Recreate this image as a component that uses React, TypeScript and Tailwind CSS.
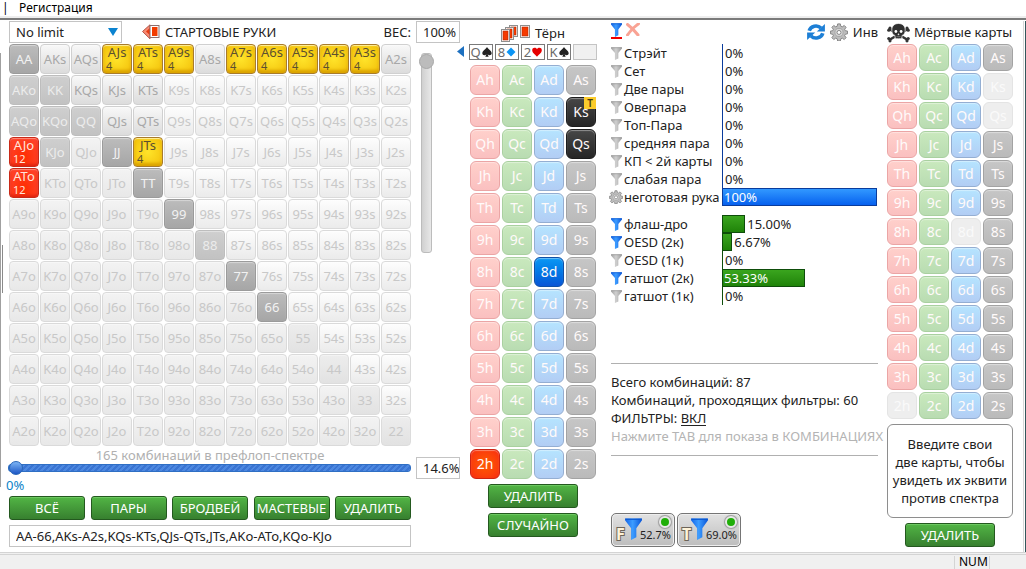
import React from 'react'
import clsx from 'clsx'

const RANKS = ['A', 'K', 'Q', 'J', 'T', '9', '8', '7', '6', '5', '4', '3', '2']
const SUITS = ['h', 'c', 'd', 's']

// combos that pass the filters
const HITS: Record<string, number> = {
    AJs: 4, ATs: 4, A9s: 4, A7s: 4, A6s: 4, A5s: 4, A4s: 4, A3s: 4, JTs: 4, AJo: 12, ATo: 12,
}
const STRONG = ['AA', 'JJ', 'TT', '99', '77', '66']
const MEDIUM = ['KK', 'QQ', '88', 'AKo', 'AQo', 'KQo', 'KJo']
const SUITED = ['AKs', 'AQs', 'A8s', 'A2s', 'KQs', 'KJs', 'KTs', 'QJs', 'QTs']

const handName = (r: number, c: number) => {
    if (r === c) return RANKS[r] + RANKS[c]
    return r < c ? RANKS[r] + RANKS[c] + 's' : RANKS[c] + RANKS[r] + 'o'
}

const handTone = (hand: string) => {
    if (HITS[hand] && hand.endsWith('s')) return 'border-[#a87b2c] bg-radial-[at_50%_50%] from-[#ffe42a] to-[#f2be08] text-[#5c5030] shadow-[inset_0_1px_1px_#fff0a0,inset_0_-3px_3px_#dba400]'
    if (HITS[hand]) return 'border-[#c92a18] bg-radial-[at_50%_70%] from-[#ff2c00] to-[#ff4632] text-[#ffe4dc] shadow-[inset_0_1px_1px_#ff9080,inset_0_-2px_3px_#e02410]'
    if (STRONG.includes(hand)) return 'border-[#9b9b9b] bg-linear-to-b from-[#bcbcbc] to-[#a6a6a6] text-[#f2f2f2]'
    if (MEDIUM.includes(hand)) return 'border-[#bdbdbd] bg-linear-to-b from-[#cfcfcf] to-[#c2c2c2] text-[#ececec]'
    if (SUITED.includes(hand)) return 'border-[#d0d0d0] bg-linear-to-b from-[#f8f8f8] to-[#dcdcdc] text-[#a8a8a8]'
    if (hand.length === 2) return 'border-[#dcdcdc] bg-linear-to-b from-[#ededed] to-[#e2e2e2] text-[#c8c8c8]'
    if (hand.endsWith('s')) return 'border-[#dadada] bg-linear-to-b from-[#fdfdfd] to-[#ebebeb] text-[#c8c8c8]'
    return 'border-[#dadada] bg-linear-to-b from-[#f3f3f3] to-[#e8e8e8] text-[#c8c8c8]'
}

const SUIT_TONE: Record<string, string> = {
    h: 'border-[#eba5a5] bg-linear-to-b from-[#ffd0cb] to-[#fac0c0]',
    c: 'border-[#a9d0a0] bg-linear-to-b from-[#c9e9bd] to-[#b9dcb2]',
    d: 'border-[#94aed2] bg-linear-to-b from-[#b5e4ff] to-[#b2cdf4]',
    s: 'border-[#a3a3a3] bg-linear-to-b from-[#c6c6c6] to-[#bababa]',
}
const SUIT_ON: Record<string, string> = {
    h: 'border-[#cc2314] bg-radial from-[#ff5a00] to-[#f82a10]',
    d: 'border-[#0f4fa6] bg-linear-to-b from-[#0c98f4] to-[#0a55d6]',
    s: 'border-[#1c1c1c] bg-linear-to-b from-[#474747] to-[#262626]',
}

const MADE = ['Стрэйт', 'Сет', 'Две пары', 'Оверпара', 'Топ-Пара', 'средняя пара', 'КП < 2й карты', 'слабая пара']
const DRAWS: [string, number, string, boolean][] = [
    ['флаш-дро', 15, '15.00%', true],
    ['OESD (2к)', 6.67, '6.67%', true],
    ['OESD (1к)', 0, '0%', false],
    ['гатшот (2к)', 53.33, '53.33%', true],
    ['гатшот (1к)', 0, '0%', false],
]

const Funnel = ({ on, className }: { on?: boolean; className?: string }) => (
    <svg viewBox="0 0 12 14" preserveAspectRatio="none" className={clsx('shrink-0', className)}>
        <defs>
            <linearGradient id={on ? 'fOn' : 'fOff'} x1="0" x2="1">
                <stop offset="0" stopColor={on ? '#1565e8' : '#a2a2a2'} />
                <stop offset="0.45" stopColor={on ? '#3d9dff' : '#d0d0d0'} />
                <stop offset="1" stopColor={on ? '#0a55d8' : '#9c9c9c'} />
            </linearGradient>
        </defs>
        <path d="M0 0.300H12V1.500L8 6.500V12.300L4.300 14V6.500L0 1.500Z" fill={on ? 'url(#fOn)' : 'url(#fOff)'} />
        <path d="M0.300 0.800H11.700" stroke={on ? '#0b58d0' : '#999'} strokeWidth="0.8" />
    </svg>
)

const Gear = ({ className }: { className?: string }) => (
    <svg viewBox="0 0 20 20" className={clsx('shrink-0', className)}>
        <path
            d="M8.500 1h3l.5 2.600 1.600.7 2.200-1.600 2.100 2.100-1.600 2.200.7 1.600 2.500.4v3l-2.500.5-.7 1.600 1.600 2.200-2.100 2.100-2.200-1.600-1.600.7-.5 2.500h-3L8 17.500l-1.600-.7-2.200 1.600-2.100-2.100 1.600-2.200-.7-1.600L.5 12V9l2.500-.4.7-1.600-1.600-2.200 2.100-2.100 2.200 1.600L8 3.600Z"
            fill="#bdbdbd"
            stroke="#7e7e7e"
        />
        <circle cx="10" cy="10.500" r="4.500" fill="#d6d6d6" stroke="#9a9a9a" strokeWidth="0.800" />
        <circle cx="10" cy="10.500" r="2.200" fill="#fff" stroke="#7e7e7e" />
    </svg>
)

const RedCard = ({ x, y, w, h }: { x: number; y: number; w: number; h: number }) => (
    <g>
        <rect x={x + 0.5} y={y + 0.5} width={w} height={h} fill="#fff" stroke="#8f8f8f" />
        <rect x={x + 2} y={y + 2} width={w - 3} height={h - 3} fill="#f63a00" stroke="#b52a00" strokeWidth="0.6" />
    </g>
)

const Skull = () => (
    <svg viewBox="0 0 23 20" className="h-5 w-[23px] shrink-0">
        <g stroke="#333" strokeWidth="2.600" strokeLinecap="round">
            <path d="M3 6.500L20 16.500M20 6.500L3 16.500" />
        </g>
        <g fill="#333">
            <circle cx="1.800" cy="7.200" r="1.600" /><circle cx="3" cy="5.200" r="1.600" />
            <circle cx="21.200" cy="7.200" r="1.600" /><circle cx="20" cy="5.200" r="1.600" />
            <circle cx="1.800" cy="15.500" r="1.600" /><circle cx="3" cy="17.800" r="1.600" />
            <circle cx="21.200" cy="15.500" r="1.600" /><circle cx="20" cy="17.800" r="1.600" />
        </g>
        <path d="M11.500.5C7 .5 4.800 3.500 4.800 7c0 2.200.6 3.200 1.200 4.200.3.700.8.900 1.800 1.100l.4 2.900c1 .8 5.600.8 6.600 0l.4-2.900c1-.2 1.500-.4 1.800-1.100.6-1 1.200-2 1.200-4.200 0-3.500-2.200-6.500-6.700-6.500Z" fill="#303030" stroke="#fff" strokeWidth="0.700" />
        <circle cx="8.900" cy="8.500" r="1.400" fill="#fff" />
        <circle cx="14.100" cy="8.500" r="1.400" fill="#fff" />
        <path d="M11.500 10.500l-.7 1.400h1.400ZM9.500 13.700h4" fill="#fff" stroke="#ddd" strokeWidth="0.400" />
    </svg>
)

const Suit = ({ suit }: { suit: string }) => (
    <svg viewBox="0 0 10 10" className="size-2.5">
        {suit === 's' && <path d="M5 0C4 2 .3 3.900.3 6.300c0 2 2.700 2.500 4.100 1L3.300 9.800h3.400L5.600 7.300c1.400 1.500 4.100 1 4.100-1C9.700 3.900 6 2 5 0Z" fill="#222" />}
        {suit === 'd' && <path d="M5 .5 9.500 5 5 9.500.5 5Z" fill="#0b95f5" />}
        {suit === 'h' && <path d="M5 9.700C3.500 7.500.2 6 .2 3.200.2.500 3.800 0 5 2.300 6.200 0 9.800.5 9.800 3.200 9.800 6 6.500 7.500 5 9.700Z" fill="#e60000" />}
    </svg>
)

const GreenButton = ({ children, className }: { children: React.ReactNode; className?: string }) => (
    <button className={clsx('h-6 rounded-[3px] border border-[#24591f] bg-linear-to-b from-[#52b545] to-[#37802f] text-center text-[13px] leading-[22px] whitespace-nowrap text-white shadow-[inset_0_1px_0_#6cc860]', className)}>
        {children}
    </button>
)

const CardGrid = ({ dead, on, className }: { dead?: string[]; on?: string[]; className: string }) => (
    <div className="grid grid-cols-[repeat(4,30px)] gap-0.5">
        {RANKS.flatMap((r) => SUITS.map((s) => r + s)).map((card) => (
            <button
                key={card}
                className={clsx(
                    'relative rounded-[6px] border text-sm',
                    className,
                    dead?.includes(card) ? 'border-[#e4e4e4] bg-[#eeeeee] text-[#fafafa]' : on?.includes(card) ? SUIT_ON[card[1]] : SUIT_TONE[card[1]],
                    !dead?.includes(card) && 'text-[#fffafa] shadow-[inset_0_1px_1px_rgba(255,255,255,0.4)]',
                )}
            >
                {card}
                {on && card === 'Ks' && (
                    <span className="absolute -top-px -right-px size-3 bg-[#fccc2c] text-[10px] leading-3 font-semibold text-[#443a10]">T</span>
                )}
            </button>
        ))}
    </div>
)

const StatRow = ({ label, pct, text, on, gear, tone }: { label: string; pct: number; text: string; on?: boolean; gear?: boolean; tone: 'blue' | 'green' }) => {
    const inside = pct > 30
    return (
        <div className="flex h-[18px] items-center text-[13px] leading-[18px] whitespace-nowrap">
            <div className="flex w-[111px] items-center">
                <button aria-label={label} className="flex w-[13px] shrink-0 justify-start">
                    {gear ? <Gear className="-ml-0.5 size-[14px]" /> : <Funnel on={on} className="h-[13px] w-[11px]" />}
                </button>
                {label}
            </div>
            <div className={clsx('flex h-full flex-1 items-center border-l', tone === 'blue' ? 'border-[#0a3c9c]' : 'border-[#0e4d0a]')}>
                {pct > 0 && (
                    <div
                        className={clsx(
                            '-ml-px h-full border pl-px leading-4 text-white',
                            tone === 'blue' ? 'border-[#0a3c9c] bg-linear-to-b from-[#3298ff] to-[#0860ee]' : 'border-[#0e4d0a] bg-linear-to-b from-[#3aa51e] to-[#1f8308]',
                        )}
                        style={{ width: `${pct}%` }}
                    >
                        {inside && text}
                    </div>
                )}
                {!inside && <span className="pl-0.5">{text}</span>}
            </div>
        </div>
    )
}

const StreetButton = ({ letter, value }: { letter: string; value: string }) => (
    <button className="relative flex h-[34px] w-16 items-end rounded-[5px] border border-[#757575] bg-linear-to-b from-[#e2e2e2] to-[#bdbdbd] pl-1 shadow-[inset_0_0_0_1px_#eeeeee]">
        <span className="w-[9px] text-base leading-6 font-bold text-[#fff3d8] [paint-order:stroke] [-webkit-text-stroke:2px_#6c6459]">{letter}</span>
        <Funnel on className="mb-1.5 h-[22px] w-[17px]" />
        <span className="absolute right-[3px] bottom-0.5 text-[11px] leading-[18px]">{value}</span>
        <span className="absolute top-0.5 right-[3px] size-3 rounded-full border-2 border-[#e8e8e8] bg-[#1fae08] shadow-[0_0_1px_1px_#9a9a9a]" />
    </button>
)

const BOARD: [string, string][] = [['Q', 's'], ['8', 'd'], ['2', 'h'], ['K', 's']]

const App = () => {
    return (
        <div className="flex min-h-screen flex-col overflow-hidden bg-white font-['Noto_Sans','Open_Sans',sans-serif] text-[#222222]">
            {/* Menu */}
            <nav className="flex h-[18px] items-center border-b-2 border-[#eeeeee] text-xs text-black">
                <span className="w-[19px] pl-0.5">|</span>
                <a href="#reg">Регистрация</a>
            </nav>

            <main className="flex flex-1 border-t-2 border-[#7b7b7b] pt-px">
                {/* Left window edge */}
                <div className="flex w-[9px] shrink-0 pt-8">
                    <div className="h-[434px] w-px bg-[#a0a0a0]" />
                    <div className="mt-48 ml-px h-12 w-px bg-[#8a8a8a]" />
                </div>

                {/* Starting hands */}
                <section className="w-[402px] shrink-0">
                    <div className="flex h-[23px] items-start text-[13px] leading-[22px]">
                        <div className="relative h-[22px] w-[113px]">
                            <select aria-label="Limit" className="size-full appearance-none border border-[#c4c4c4] bg-white pl-1.5 leading-5">
                                <option>No limit</option>
                            </select>
                            <svg viewBox="0 0 10 8" className="pointer-events-none absolute top-[7px] right-1 h-2 w-2.5">
                                <path d="M0 0H10L5 8Z" fill="#0b83d0" />
                            </svg>
                        </div>
                        <svg viewBox="0 0 18 16" className="mt-[3px] mr-[5px] ml-5 h-4 w-[18px]">
                            <path d="M.5 7.500L8 .8V14.800Z" fill="#f98a72" stroke="#b5564a" />
                            <path d="M4 7.500L9 3V12Z" fill="#e83a12" />
                            <rect x="8" y="1.500" width="9" height="12" fill="#fff" stroke="#8c7070" />
                            <rect x="10" y="3" width="5.500" height="9" fill="#f23c00" />
                        </svg>
                        <h2>СТАРТОВЫЕ РУКИ</h2>
                        <label htmlFor="weight" className="ml-auto">ВЕС:</label>
                    </div>
                    <div className="grid grid-cols-[repeat(13,30px)] gap-px">
                        {RANKS.map((_, r) =>
                            RANKS.map((_, c) => {
                                const hand = handName(r, c)
                                return (
                                    <button
                                        key={hand}
                                        className={clsx(
                                            'h-[30px] rounded-[4px] border text-[13px] whitespace-nowrap',
                                            HITS[hand] ? 'text-left leading-[14px]' : 'leading-7 shadow-[inset_0_1px_1px_rgba(255,255,255,0.4)]',
                                            handTone(hand),
                                        )}
                                    >
                                        {HITS[hand] ? (
                                            <>
                                                <span className="block text-center">{hand}</span>
                                                <span className="block pl-[3px] text-[11px] leading-[14px]">{HITS[hand]}</span>
                                            </>
                                        ) : hand}
                                    </button>
                                )
                            }),
                        )}
                    </div>
                    <label htmlFor="range" className="block h-3.5 text-center text-[13px] leading-[18px] text-[#b0b0b0]">
                        165 комбинаций в префлоп-спектре
                    </label>
                    <input
                        id="range"
                        type="range"
                        defaultValue={0}
                        className="-ml-px block h-4 w-[403px] appearance-none bg-transparent [&::-webkit-slider-runnable-track]:h-2 [&::-webkit-slider-runnable-track]:rounded-[3px] [&::-webkit-slider-runnable-track]:border [&::-webkit-slider-runnable-track]:border-[#2f6fc4] [&::-webkit-slider-runnable-track]:bg-[repeating-linear-gradient(135deg,#3a74d2_0_2px,#4c88e0_2px_4px)] [&::-webkit-slider-thumb]:-mt-1 [&::-webkit-slider-thumb]:size-3.5 [&::-webkit-slider-thumb]:appearance-none [&::-webkit-slider-thumb]:rounded-full [&::-webkit-slider-thumb]:border [&::-webkit-slider-thumb]:border-[#2765b8] [&::-webkit-slider-thumb]:bg-linear-to-b [&::-webkit-slider-thumb]:from-[#7db4f4] [&::-webkit-slider-thumb]:to-[#1d55c4]"
                    />
                    <div className="-ml-[3px] h-5 text-[13px] leading-[18px] text-[#0b83c8]">0%</div>
                    <div className="flex justify-between">
                        {['ВСЁ', 'ПАРЫ', 'БРОДВЕЙ', 'МАСТЕВЫЕ', 'УДАЛИТЬ'].map((b) => (
                            <GreenButton key={b} className="w-[76px]">{b}</GreenButton>
                        ))}
                    </div>
                    <input
                        aria-label="Спектр"
                        defaultValue="AA-66,AKs-A2s,KQs-KTs,QJs-QTs,JTs,AKo-ATo,KQo-KJo"
                        className="mt-[5px] block h-[22px] w-full border border-[#c4c4c4] px-1.5 text-[13px]"
                    />
                </section>

                {/* Weight */}
                <section className="ml-[5px] flex w-11 shrink-0 flex-col">
                    <input id="weight" defaultValue="100%" className="h-[22px] w-full border border-[#c4c4c4] pl-1.5 text-[13px]" />
                    <input
                        aria-label="ВЕС"
                        type="range"
                        defaultValue={0}
                        className="mt-2.5 ml-0.5 h-[200px] w-4 appearance-none bg-transparent [writing-mode:vertical-lr] [&::-webkit-slider-runnable-track]:w-[11px] [&::-webkit-slider-runnable-track]:rounded-[3px] [&::-webkit-slider-runnable-track]:border [&::-webkit-slider-runnable-track]:border-[#bcbcbc] [&::-webkit-slider-runnable-track]:bg-linear-to-r [&::-webkit-slider-runnable-track]:from-[#d0d0d0] [&::-webkit-slider-runnable-track]:to-[#e8e8e8] [&::-webkit-slider-thumb]:-ml-[3px] [&::-webkit-slider-thumb]:size-[15px] [&::-webkit-slider-thumb]:appearance-none [&::-webkit-slider-thumb]:rounded-full [&::-webkit-slider-thumb]:border [&::-webkit-slider-thumb]:border-[#a8a8a8] [&::-webkit-slider-thumb]:bg-[#bcbcbc]"
                    />
                    <input aria-label="Процент рук" defaultValue="14.6%" className="mt-[204px] h-[22px] w-full border border-[#c4c4c4] pl-1.5 text-[13px]" />
                </section>

                {/* Board */}
                <section className="relative ml-[9px] flex w-32 shrink-0 flex-col items-center">
                    <div className="flex h-[23px] items-center gap-[5px] pt-0.5 text-[13px]">
                        <svg viewBox="0 0 29 18" className="h-[18px] w-[29px]">
                            <RedCard x={8} y={0} w={8} h={11} />
                            <RedCard x={4} y={2} w={8} h={12} />
                            <RedCard x={0} y={4} w={8} h={12} />
                            <RedCard x={19} y={0} w={9} h={12} />
                        </svg>
                        <h2>Тёрн</h2>
                    </div>
                    <button aria-label="Назад" className="absolute top-[25px] -left-3">
                        <svg viewBox="0 0 7 11" className="h-[11px] w-[7px]"><path d="M7 0V11L0 5.500Z" fill="#1d70c0" /></svg>
                    </button>
                    <div className="flex h-4 w-full gap-0.5">
                        {BOARD.map(([rank, suit]) => (
                            <button key={rank} className="flex w-6 items-center justify-center gap-px border border-[#7a7a7a] text-[13px] leading-[14px] text-[#6a6a6a]">
                                {rank}<Suit suit={suit} />
                            </button>
                        ))}
                        <button aria-label="Ривер" className="w-6 border border-[#c4c4c4] bg-[#f0f0f0]" />
                    </div>
                    <div className="mt-[5px] mb-[5px]">
                        <CardGrid on={['Ks', 'Qs', '8d', '2h']} className="h-[30px]" />
                    </div>
                    <GreenButton className="w-[90px]">УДАЛИТЬ</GreenButton>
                    <GreenButton className="mt-[5px] w-[90px]">СЛУЧАЙНО</GreenButton>
                </section>

                {/* Filters */}
                <section className="ml-3.5 flex min-w-0 flex-1 flex-col">
                    <div className="flex h-[23px] items-start text-[13px]">
                        <button aria-label="Фильтр" className="flex flex-col items-center border-b-2 border-[#f00000] pt-0.5">
                            <Funnel on className="h-[14px] w-[11px]" />
                        </button>
                        <button aria-label="Сбросить" className="ml-1 pt-0.5">
                            <svg viewBox="0 0 14 13" className="h-[13px] w-3.5">
                                <path d="M1.500 1.500C5 4 9 8 12 12M12.500.8C8 4 4 8 1.500 12" stroke="#f9a394" strokeWidth="3" fill="none" strokeLinecap="round" />
                            </svg>
                        </button>
                        <button aria-label="Обновить" className="ml-auto pt-0.5">
                            <svg viewBox="0 0 18 18" className="size-[18px]">
                                <g fill="none" stroke="#1d7fd6" strokeWidth="3.600">
                                    <path d="M2.200 7.800A7 6.500 0 0 1 14 5" />
                                    <path d="M15.800 10.200A7 6.500 0 0 1 4 13" />
                                </g>
                                <path d="M17.900 1V8.500H9.800ZM.1 17V9.500H8.200Z" fill="#1d7fd6" />
                            </svg>
                        </button>
                        <button aria-label="Настройки" className="ml-[5px] pt-0.5"><Gear className="size-[18px]" /></button>
                        <button className="ml-[5px] leading-[22px]">Инв</button>
                    </div>
                    <div>
                        {MADE.map((m) => <StatRow key={m} label={m} pct={0} text="0%" tone="blue" />)}
                        <StatRow label="неготовая рука" pct={100} text="100%" gear tone="blue" />
                    </div>
                    <div className="mt-[9px]">
                        {DRAWS.map(([label, pct, text, on]) => (
                            <StatRow key={label} label={label} pct={pct} text={text} on={on} tone="green" />
                        ))}
                    </div>
                    <div className="mt-[58px] border-y border-[#b0b0b0] pt-[9px] pb-[10px] text-[13px] leading-[18px] whitespace-nowrap">
                        <p>Всего комбинаций: 87</p>
                        <p>Комбинаций, проходящих фильтры: 60</p>
                        <p>ФИЛЬТРЫ: <button className="border-b border-[#222222] leading-[14px]">ВКЛ</button></p>
                        <p className="text-[#b4b4b4]">Нажмите TAB для показа в КОМБИНАЦИЯХ</p>
                    </div>
                    <div className="mt-[57px] flex gap-0.5">
                        <StreetButton letter="F" value="52.7%" />
                        <StreetButton letter="T" value="69.0%" />
                    </div>
                </section>

                {/* Dead cards */}
                <section className="ml-[9px] flex w-[126px] shrink-0 flex-col items-center">
                    <div className="flex h-[23px] w-full items-center gap-1 text-[13px] whitespace-nowrap">
                        <Skull />
                        <h2>Мёртвые карты</h2>
                    </div>
                    <CardGrid dead={['Ks', 'Qs', '8d', '2h']} className="h-[27px]" />
                    <p className="mt-[5px] w-full rounded-[6px] border border-[#8e8e8e] py-2.5 text-center text-[13px] leading-[18px]">
                        Введите свои<br />две карты, чтобы<br />увидеть их эквити<br />против спектра
                    </p>
                    <GreenButton className="mt-[5px] w-[90px]">УДАЛИТЬ</GreenButton>
                </section>

                {/* Right window edge */}
                <div className="flex w-[13px] shrink-0 justify-end">
                    <div className="w-0.5 border-l border-[#d8d8d8]" />
                    <div className="w-px bg-[#33585c]" />
                </div>
            </main>

            {/* Status bar */}
            <footer className="flex h-[17px] items-end justify-end border-t-3 border-double border-[#d4d4d4] bg-[#f0f0f0] text-xs leading-3 text-black">
                <span className="h-[13px] w-9 border-x border-[#d4d4d4] pl-1">NUM</span>
                <span className="w-9" />
            </footer>
        </div>
    )
}

export default App
